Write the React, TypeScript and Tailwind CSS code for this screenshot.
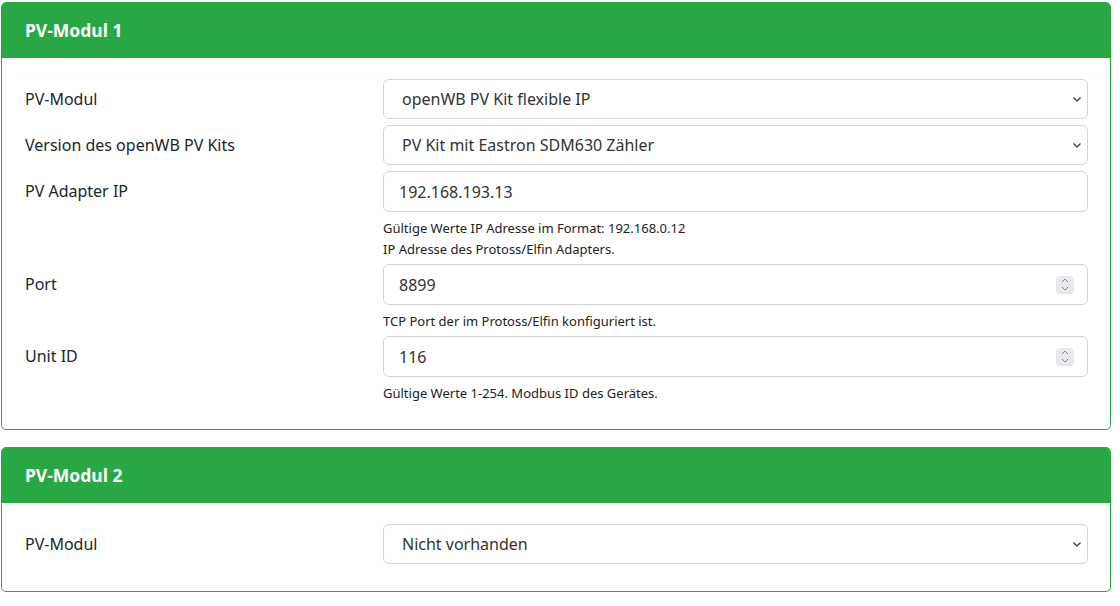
import React from 'react';

const font = { fontFamily: '"Noto Sans", "Open Sans", Arial, sans-serif' };

const Chevron: React.FC = () => (
  <svg width="10" height="7" viewBox="0 0 10 7" className="shrink-0">
    <path d="M1.5 1.5 L5 5 L8.5 1.5" fill="none" stroke="#444" strokeWidth="1.4" />
  </svg>
);

const Spinner: React.FC = () => (
  <div className="flex h-[18px] w-[18px] flex-col items-center justify-center gap-[3px] rounded-sm bg-[#e9e9ed]">
    <svg width="8" height="5" viewBox="0 0 8 5">
      <path d="M1 4 L4 1 L7 4" fill="none" stroke="#8a8a8a" strokeWidth="1" />
    </svg>
    <svg width="8" height="5" viewBox="0 0 8 5">
      <path d="M1 1 L4 4 L7 1" fill="none" stroke="#8a8a8a" strokeWidth="1" />
    </svg>
  </div>
);

const SelectBox: React.FC<{ value: string }> = ({ value }) => (
  <div className="flex h-[40px] items-center justify-between rounded-md border border-[#d4d4d4] bg-white pl-[18px] pr-[5px] text-[16px] text-[#333]">
    <span>{value}</span>
    <Chevron />
  </div>
);

const TextBox: React.FC<{ value: string; number?: boolean }> = ({ value, number }) => (
  <div className="flex h-[41px] items-center justify-between rounded-md border border-[#d4d4d4] bg-white pl-[15px] pr-[13px] text-[16px] text-[#333]">
    <span>{value}</span>
    {number && <Spinner />}
  </div>
);

const Help: React.FC<{ lines: string[] }> = ({ lines }) => (
  <div className="mt-[8px] flex flex-col gap-[4px] text-[13px] leading-[17px] text-[#222]">
    {lines.map((l) => (
      <span key={l}>{l}</span>
    ))}
  </div>
);

const Row: React.FC<{ label: string; children: React.ReactNode }> = ({ label, children }) => (
  <div className="grid grid-cols-[358px_1fr]">
    <div className="flex h-[40px] items-center text-[16px] text-[#212529]">{label}</div>
    <div>{children}</div>
  </div>
);

const Card: React.FC<{ title: string; children: React.ReactNode }> = ({ title, children }) => (
  <div className="overflow-hidden rounded-[5px] border border-[#28a745] bg-white">
    <div className="flex h-[55px] items-center bg-[#28a745] px-[23px] text-[17.5px] font-bold text-white">
      {title}
    </div>
    <div className="flex flex-col gap-[6px] pt-[21px] pr-[22px] pb-[27px] pl-[23px]">{children}</div>
  </div>
);

const App: React.FC = () => {
  return (
    <div className="min-h-[606px] bg-white pt-[2px] pl-[1px] pr-[9px]" style={font}>
      <Card title="PV-Modul 1">
        <Row label="PV-Modul">
          <SelectBox value="openWB PV Kit flexible IP" />
        </Row>
        <Row label="Version des openWB PV Kits">
          <SelectBox value="PV Kit mit Eastron SDM630 Zähler" />
        </Row>
        <Row label="PV Adapter IP">
          <TextBox value="192.168.193.13" />
          <Help
            lines={[
              'Gültige Werte IP Adresse im Format: 192.168.0.12',
              'IP Adresse des Protoss/Elfin Adapters.',
            ]}
          />
        </Row>
        <Row label="Port">
          <TextBox value="8899" number />
          <Help lines={['TCP Port der im Protoss/Elfin konfiguriert ist.']} />
        </Row>
        <Row label="Unit ID">
          <TextBox value="116" number />
          <Help lines={['Gültige Werte 1-254. Modbus ID des Gerätes.']} />
        </Row>
      </Card>
      <div className="h-[17px]" />
      <Card title="PV-Modul 2">
        <Row label="PV-Modul">
          <SelectBox value="Nicht vorhanden" />
        </Row>
      </Card>
    </div>
  );
};

export default App;
